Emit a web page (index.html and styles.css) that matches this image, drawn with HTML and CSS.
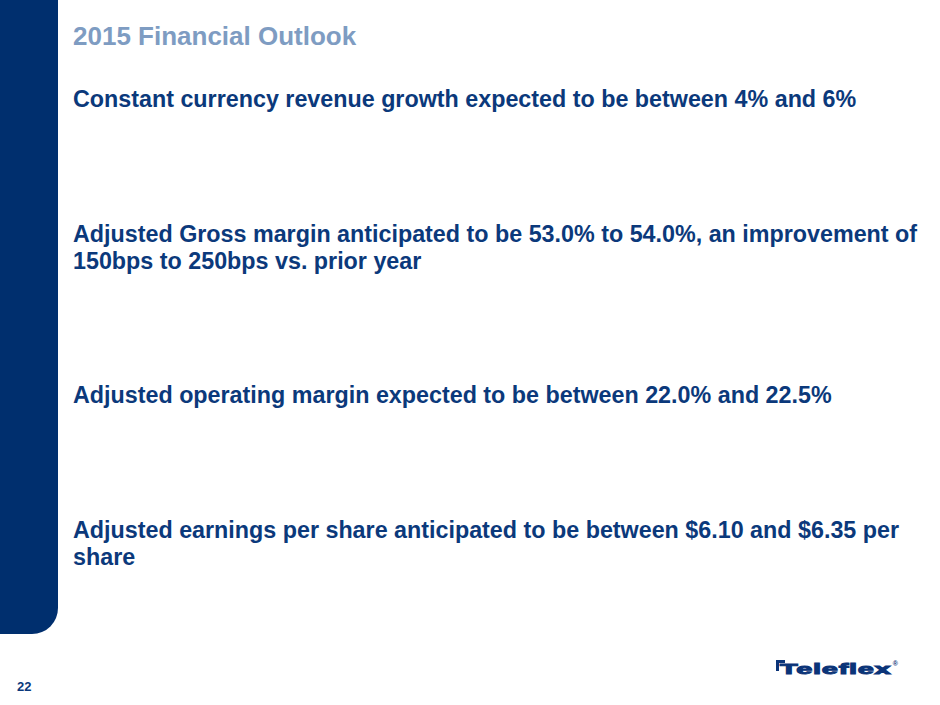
FILE: index.html
```html
<!DOCTYPE html>
<html lang="en">
<head>
<meta charset="utf-8">
<title>2015 Financial Outlook</title>
<link rel="stylesheet" href="styles.css">
</head>
<body>
<div class="slide">
  <div class="slide-top">
    <div class="side-bar"></div>
    <div class="content">
      <h1 class="title">2015 Financial Outlook</h1>
      <div class="points">
        <p class="point">Constant currency revenue growth expected to be between 4% and 6%</p>
        <p class="point point-2">Adjusted Gross margin anticipated to be 53.0% to 54.0%, an improvement of 150bps to 250bps vs. prior year</p>
        <p class="point point-3">Adjusted operating margin expected to be between 22.0% and 22.5%</p>
        <p class="point point-4">Adjusted earnings per share anticipated to be between $6.10 and $6.35 per share</p>
      </div>
    </div>
  </div>
  <div class="footer">
    <span class="page-num">22</span>
    <div class="logo">
      <span class="logo-mark"></span>
      <span class="logo-word-wrap"><span class="logo-word">Teleflex</span></span>
      <span class="logo-reg">®</span>
    </div>
  </div>
</div>
</body>
</html>
```
FILE: styles.css
```css
html, body {
  margin: 0;
  padding: 0;
  background: #ffffff;
}
body {
  font-family: "Liberation Sans", Arial, sans-serif;
}
.slide {
  width: 940px;
  height: 705px;
  display: flex;
  flex-direction: column;
  overflow: hidden;
}
.slide-top {
  height: 634px;
  display: flex;
  flex-direction: row;
}
.side-bar {
  width: 58px;
  flex: 0 0 58px;
  background: #002f6e;
  border-bottom-right-radius: 26px;
}
.content {
  padding-left: 15px;
  width: 862px;
}
.title {
  margin: 21px 0 0 0;
  font-size: 26px;
  line-height: 30px;
  font-weight: bold;
  color: #7e9cc2;
}
.points {
  margin-top: 35px;
  display: flex;
  flex-direction: column;
}
.point {
  margin: 0;
  font-size: 23.3px;
  line-height: 27.2px;
  font-weight: bold;
  color: #0b397b;
}
.point-2 {
  margin-top: 108px;
}
.point-3 {
  margin-top: 106px;
}
.point-4 {
  margin-top: 108px;
}
.footer {
  flex: 1;
  display: flex;
  flex-direction: row;
  justify-content: space-between;
  align-items: flex-start;
  padding: 0 42px 0 17px;
}
.page-num {
  margin-top: 45px;
  font-size: 13px;
  line-height: 15px;
  font-weight: bold;
  color: #0b397b;
}
.logo {
  margin-top: 26px;
  display: flex;
  flex-direction: row;
  align-items: flex-start;
  color: #0b3478;
}
.logo-mark {
  flex: 0 0 auto;
  width: 9px;
  height: 11px;
  border-left: 3px solid #0b3478;
  border-top: 3px solid #0b3478;
  box-sizing: border-box;
  margin-right: -5px;
}
.logo-word-wrap {
  width: 112px;
  height: 11px;
  display: block;
}
.logo-word {
  display: inline-block;
  font-family: "Liberation Sans", Arial, sans-serif;
  font-size: 15.2px;
  line-height: 11px;
  height: 11px;
  font-weight: bold;
  -webkit-text-stroke: 1px #0b3478;
  letter-spacing: 0.4px;
  transform: scaleX(1.9);
  transform-origin: left top;
  white-space: nowrap;
}
.logo-reg {
  font-size: 7px;
  line-height: 7px;
  font-weight: bold;
  margin-left: 1px;
}
```
